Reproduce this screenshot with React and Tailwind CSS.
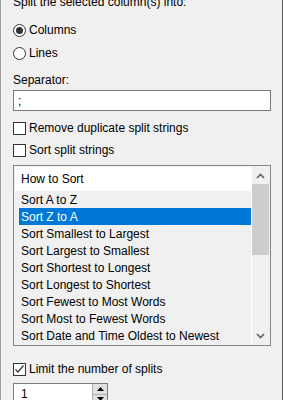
import React from "react";

const items = [
  "Sort A to Z",
  "Sort Z to A",
  "Sort Smallest to Largest",
  "Sort Largest to Smallest",
  "Sort Shortest to Longest",
  "Sort Longest to Shortest",
  "Sort Fewest to Most Words",
  "Sort Most to Fewest Words",
  "Sort Date and Time Oldest to Newest",
];

const Radio = ({ checked, label }) => (
  <div className="flex items-center h-[14px]">
    <span className="w-[13px] h-[13px] rounded-full border border-[#333] bg-white flex items-center justify-center">
      {checked && <span className="w-[7px] h-[7px] rounded-full bg-[#333]" />}
    </span>
    <span className="ml-[3px]">{label}</span>
  </div>
);

const Check = ({ checked, label }) => (
  <div className="flex items-center h-[14px]">
    <span className="w-[13px] h-[13px] border border-[#333] bg-white flex items-center justify-center">
      {checked && (
        <svg width="11" height="11" viewBox="0 0 11 11">
          <path d="M1.5 5.5 L4 8 L9.5 1.5" fill="none" stroke="#333" strokeWidth="1.2" />
        </svg>
      )}
    </span>
    <span className="ml-[3px]">{label}</span>
  </div>
);

const Chevron = ({ up }) => (
  <svg width="9" height="6" viewBox="0 0 9 6">
    <path
      d={up ? "M1 5 L4.5 1.5 L8 5" : "M1 1 L4.5 4.5 L8 1"}
      fill="none"
      stroke="#606060"
      strokeWidth="1.6"
    />
  </svg>
);

const App = () => {
  return (
    <div
      className="w-[283px] h-[400px] overflow-hidden bg-[#f0f0f0] border-l border-[#a0a0a0] border-r border-r-[#5a5a5a] text-[12px] text-black pl-[12px]"
      style={{ fontFamily: '"Liberation Sans", Arial, sans-serif' }}
    >
      <div className="h-[14px] mt-[-5px] flex items-center">Split the selected column(s) into:</div>

      <div className="mt-[14px]">
        <Radio checked label="Columns" />
      </div>
      <div className="mt-[9px]">
        <Radio label="Lines" />
      </div>

      <div className="mt-[13px] h-[14px] flex items-center">Separator:</div>
      <div className="mt-[3px] w-[258px] h-[21px] border border-[#7a7a7a] bg-white flex items-center pl-[4px]">;</div>

      <div className="mt-[10px]">
        <Check label="Remove duplicate split strings" />
      </div>
      <div className="mt-[8px]">
        <Check label="Sort split strings" />
      </div>

      <div className="mt-[8px] w-[258px] h-[181px] border border-[#828790] p-px flex">
        <div className="flex-1 flex flex-col border-r border-white">
          <div className="h-[24px] bg-white flex items-center pl-[6px]">How to Sort</div>
          {items.map((it, i) => (
            <div
              key={it}
              className={
                "h-[17px] ml-[4px] pl-[2px] flex items-center shrink-0 " +
                (i === 1 ? "bg-[#0078d7] text-white" : "")
              }
            >
              {it}
            </div>
          ))}
        </div>
        <div className="w-[17px] flex flex-col">
          <div className="h-[17px] flex items-center justify-center">
            <Chevron up />
          </div>
          <div className="h-[71px] bg-[#cdcdcd]" />
          <div className="flex-1" />
          <div className="h-[17px] flex items-center justify-center">
            <Chevron />
          </div>
        </div>
      </div>

      <div className="mt-[16px]">
        <Check checked label="Limit the number of splits" />
      </div>

      <div className="mt-[7px] w-[95px] h-[22px] border border-[#7a7a7a] bg-white flex">
        <div className="flex-1 flex items-center pl-[7px]">1</div>
        <div className="w-[15px] flex flex-col border-l border-[#adadad]">
          <div className="flex-1 bg-[#e1e1e1] border-b border-[#adadad] flex items-center justify-center">
            <svg width="7" height="4" viewBox="0 0 7 4"><path d="M0 4 L3.5 0 L7 4 Z" fill="#000" /></svg>
          </div>
          <div className="flex-1 bg-[#e1e1e1] flex items-center justify-center">
            <svg width="7" height="4" viewBox="0 0 7 4"><path d="M0 0 L3.5 4 L7 0 Z" fill="#000" /></svg>
          </div>
        </div>
      </div>
    </div>
  );
};

export default App;
